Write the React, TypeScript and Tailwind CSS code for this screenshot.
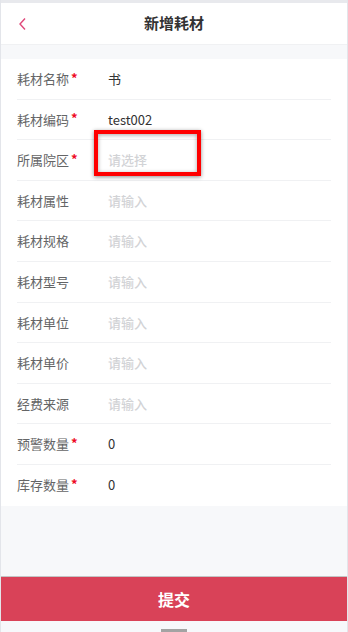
import React from "react";

type Field = {
  label: string;
  required?: boolean;
  value?: string;
  placeholder?: string;
  highlight?: boolean;
};

const fields: Field[] = [
  { label: "耗材名称", required: true, value: "书" },
  { label: "耗材编码", required: true, value: "test002" },
  { label: "所属院区", required: true, placeholder: "请选择", highlight: true },
  { label: "耗材属性", placeholder: "请输入" },
  { label: "耗材规格", placeholder: "请输入" },
  { label: "耗材型号", placeholder: "请输入" },
  { label: "耗材单位", placeholder: "请输入" },
  { label: "耗材单价", placeholder: "请输入" },
  { label: "经费来源", placeholder: "请输入" },
  { label: "预警数量", required: true, value: "0" },
  { label: "库存数量", required: true, value: "0" },
];

export default function App() {
  return (
    <div
      className="w-[348px] h-[632px] flex flex-col bg-[#f7f8fa] border-l border-r border-[#e3e5ea] overflow-hidden"
      style={{ fontFamily: '"Noto Sans CJK SC", "Noto Sans", sans-serif' }}
    >
      <div className="h-[3px] bg-[#e8e9ed]" />

      {/* header */}
      <div className="h-[42px] bg-white flex items-center relative border-b border-[#f0f1f3]">
        <button className="absolute left-[16px] top-0 h-full flex items-center">
          <svg width="12" height="14" viewBox="0 0 12 14" fill="none">
            <path d="M8 1.5 L3 7 L8 12.5" stroke="#e0487a" strokeWidth="1.4" />
          </svg>
        </button>
        <div className="flex-1 text-center text-[15px] font-bold text-[#323233]">
          新增耗材
        </div>
      </div>

      <div className="h-[14px]" />

      {/* form */}
      <div className="bg-white">
        {fields.map((f, i) => (
          <div key={f.label} className="px-[16px]">
            <div
              className={`h-[40.6px] flex items-center text-[13px] ${
                i < fields.length - 1 ? "border-b border-[#f0f1f3]" : ""
              }`}
            >
              <div className="w-[91px] text-[#646566] flex items-center">
                <span>{f.label}</span>
                {f.required && (
                  <span className="text-[#ee0a24] text-[13px] font-bold leading-none ml-[2px] -mt-[3px]">*</span>
                )}
              </div>
              <div className="relative flex-1">
                {f.value ? (
                  <span className="text-[#323233]">{f.value}</span>
                ) : (
                  <span className="text-[#d2d3d6] font-medium">{f.placeholder}</span>
                )}
                {f.highlight && (
                  <div className="absolute left-[-14px] top-[-20px] w-[107px] h-[46px] border-4 border-[#ff0000] shadow-[0_1px_4px_rgba(0,0,0,0.45),inset_0_1px_4px_rgba(0,0,0,0.35)]" />
                )}
              </div>
            </div>
          </div>
        ))}
      </div>

      <div className="flex-1" />

      {/* submit */}
      <div className="border-t border-[#c4c4c4]">
        <button className="w-full h-[44px] bg-[#d94258] text-white text-[16px] font-bold">
          提交
        </button>
      </div>
      <div className="h-[11px] bg-[#f7f8fb] flex justify-center items-end">
        <div className="w-[26px] h-[3px] bg-[#a3a3a3]" />
      </div>
    </div>
  );
}
